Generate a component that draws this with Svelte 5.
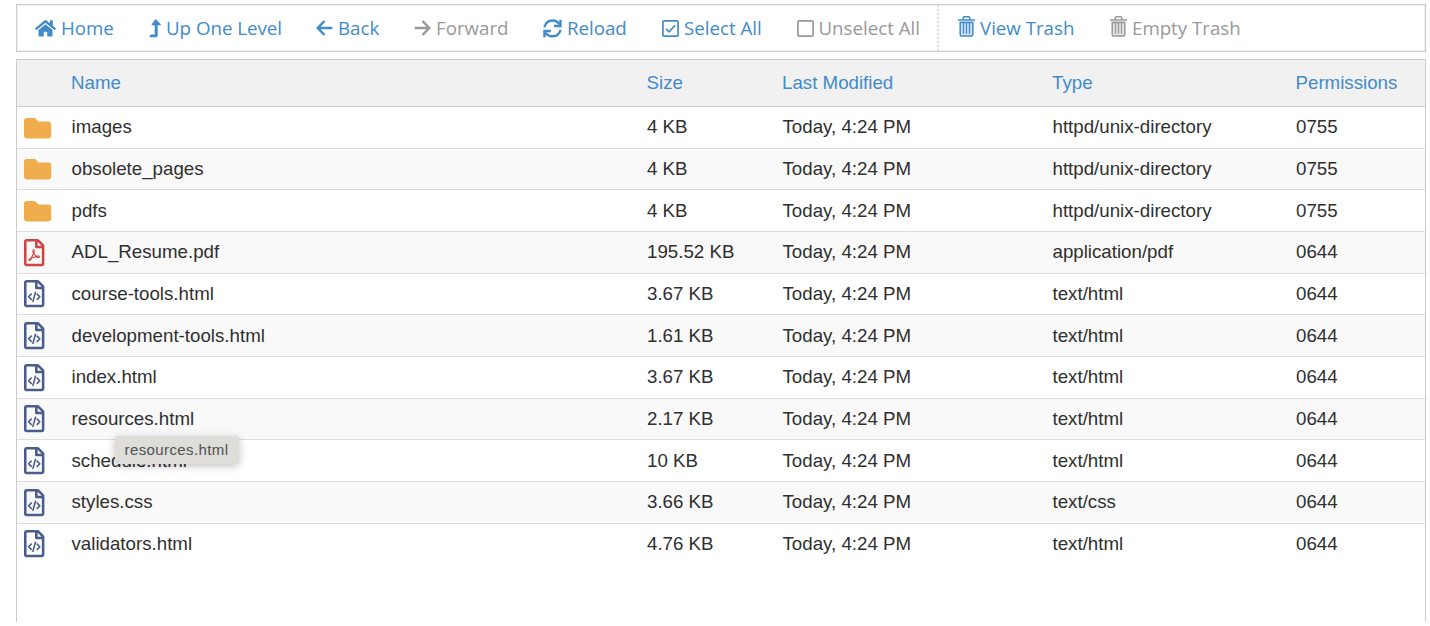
<script>
  const actions = [
    { icon: 'home', label: 'Home' },
    { icon: 'up', label: 'Up One Level' },
    { icon: 'back', label: 'Back' },
    { icon: 'forward', label: 'Forward', off: true },
    { icon: 'reload', label: 'Reload' },
    { icon: 'checked', label: 'Select All' },
    { icon: 'box', label: 'Unselect All', off: true },
    { icon: 'trash', label: 'View Trash' },
    { icon: 'trash', label: 'Empty Trash', off: true }
  ];

  const dir = 'httpd/unix-directory';
  const files = [
    { icon: 'folder', name: 'images', size: '4 KB', type: dir, perm: '0755' },
    { icon: 'folder', name: 'obsolete_pages', size: '4 KB', type: dir, perm: '0755' },
    { icon: 'folder', name: 'pdfs', size: '4 KB', type: dir, perm: '0755' },
    { icon: 'pdf', name: 'ADL_Resume.pdf', size: '195.52 KB', type: 'application/pdf', perm: '0644' },
    { icon: 'code', name: 'course-tools.html', size: '3.67 KB', type: 'text/html', perm: '0644' },
    { icon: 'code', name: 'development-tools.html', size: '1.61 KB', type: 'text/html', perm: '0644' },
    { icon: 'code', name: 'index.html', size: '3.67 KB', type: 'text/html', perm: '0644' },
    { icon: 'code', name: 'resources.html', size: '2.17 KB', type: 'text/html', perm: '0644', tip: true },
    { icon: 'code', name: 'schedule.html', size: '10 KB', type: 'text/html', perm: '0644' },
    { icon: 'code', name: 'styles.css', size: '3.66 KB', type: 'text/css', perm: '0644' },
    { icon: 'code', name: 'validators.html', size: '4.76 KB', type: 'text/html', perm: '0644' }
  ];
</script>

<main>
  <nav class="toolbar">
    {#each actions as a}
      <div class="action {a.icon}" class:off={a.off}>
        {#if a.icon === 'home'}
          <svg width="21" height="18.7" viewBox="0 0 576 512"><path d="M280.37 148.26L96 300.11V464a16 16 0 0 0 16 16l112.06-.29a16 16 0 0 0 15.92-16V368a16 16 0 0 1 16-16h64a16 16 0 0 1 16 16v95.64a16 16 0 0 0 16 16.05L464 480a16 16 0 0 0 16-16V300L295.67 148.26a12.19 12.19 0 0 0-15.3 0zM571.6 251.47L488 182.56V44.05a12 12 0 0 0-12-12h-56a12 12 0 0 0-12 12v72.61L318.47 43a48 48 0 0 0-61 0L4.34 251.47a12 12 0 0 0-1.6 16.9l25.5 31A12 12 0 0 0 45.15 301l235.22-193.74a12.19 12.19 0 0 1 15.3 0L530.9 301a12 12 0 0 0 16.9-1.6l25.5-31a12 12 0 0 0-1.7-16.93z" /></svg>
        {:else if a.icon === 'up'}
          <svg width="12" height="19" viewBox="0 0 12 19"><path d="M7.2 0.4 11.7 5.2Q12.2 6.2 11 6.2H8.7V16.6Q8.7 18.2 7.1 18.2H.9Q0 18 .5 17.2L2.1 15.5H5.7V6.2H3.4Q2.2 6.2 2.7 5.2L6.2.6Q6.7 0 7.2.4Z" /></svg>
        {:else if a.icon === 'back' || a.icon === 'forward'}
          <svg class="line" width="17" height="16" viewBox="0 0 17 16"><path class:flip={a.icon === 'forward'} d="M8.5 1 1.8 8l6.7 7M2.2 8H16.3" /></svg>
        {:else if a.icon === 'reload'}
          <svg class="line" width="19" height="19" viewBox="0 0 20 20"><path d="M1.5 8.6C2.6 4.3 6 1.6 10 1.6c3 0 5.5 1.5 7 3.8M18.4.8v6.6h-6.8M18.5 11.4C17.4 15.7 14 18.2 10 18.2c-3 0-5.5-1.3-7-3.6M1.5 19.2v-6.6h6.8" /></svg>
        {:else if a.icon === 'checked'}
          <svg class="box" width="17" height="17" viewBox="0 0 17 17"><rect x=".9" y=".9" width="15.2" height="15.2" rx="1.2" /><path d="m4 8.8 3 3 6-6.4" /></svg>
        {:else if a.icon === 'box'}
          <svg class="box" width="17" height="17" viewBox="0 0 17 17"><rect x=".9" y=".9" width="15.2" height="15.2" rx="1.2" /></svg>
        {:else}
          <svg class="bin" width="17" height="21" viewBox="0 0 17 21"><path class="tint" d="M2 5h13v15H2z" /><path d="M0 4h17M5.3 3.7V1.8q0-1 1-1h4.4q1 0 1 1v1.9M2.2 5.8v12.7q0 1.5 1.5 1.5h9.6q1.5 0 1.5-1.5V5.8M2.2 6.4h12.6" /><path class="ribs" d="M5.5 7v10.8M8.5 7v10.8M11.5 7v10.8" /></svg>
        {/if}
        <span>{a.label}</span>
      </div>
    {/each}
  </nav>

  <section class="list">
    <div class="row head">
      <span></span><span>Name</span><span>Size</span><span>Last Modified</span><span>Type</span><span>Permissions</span>
    </div>
    {#each files as f}
      <div class="row">
        <span class="kind">
          {#if f.icon === 'folder'}
            <svg class="folder" width="27.2" height="20.4" viewBox="0 64 512 384"><path d="M464 128H272l-64-64H48C21.49 64 0 85.49 0 112v288c0 26.51 21.49 48 48 48h416c26.51 0 48-21.49 48-48V176c0-26.51-21.49-48-48-48z" /></svg>
          {:else if f.icon === 'pdf'}
            <svg class="pdf" width="20.4" height="27.2" viewBox="0 0 384 512"><path d="M369.9 97.9L286 14C277 5 264.8-.1 252.1-.1H48C21.5 0 0 21.5 0 48v416c0 26.5 21.5 48 48 48h288c26.5 0 48-21.5 48-48V131.9c0-12.7-5.1-25-14.1-34zM332.1 128H256V51.9l76.1 76.1zM48 464V48h160v104c0 13.3 10.7 24 24 24h104v288H48zm250.2-143.7c-12.2-12-47-8.7-64.4-6.5-17.2-10.5-28.7-25-36.8-46.3 3.9-16.1 10.1-40.6 5.4-56-4.2-26.2-37.8-23.6-42.6-5.9-4.4 16.1-.4 38.5 7 67.1-10 23.9-24.9 56-35.4 74.4-20 10.3-47 26.2-51 46.2-3.3 15.8 26 55.2 76.1-31.2 22.4-7.4 46.8-16.5 68.4-20.1 18.9 10.2 41 17 55.8 17 25.5 0 28-28.2 17.5-38.7zm-198.1 77.8c5.1-13.7 24.5-29.5 30.4-35-19 30.3-30.4 35.7-30.4 35zm81.6-190.6c7.4 0 6.7 32.1 1.8 40.8-4.4-13.9-4.3-40.8-1.8-40.8zm-24.4 136.6c9.7-16.9 18-37 24.7-54.7 8.3 15.1 18.9 27.2 30.1 35.5-20.8 4.3-38.9 13.1-54.8 19.2zm131.6-5s-5 6-37.3-7.8c35.1-2.6 40.9 5.4 37.3 7.8z" /></svg>
          {:else}
            <svg class="code" width="20.4" height="27.2" viewBox="0 0 384 512"><path d="M369.9 97.9L286 14C277 5 264.8-.1 252.1-.1H48C21.5 0 0 21.5 0 48v416c0 26.5 21.5 48 48 48h288c26.5 0 48-21.5 48-48V131.9c0-12.7-5.1-25-14.1-34zM256 51.9l76.1 76.1H256zM336 464H48V48h160v104c0 13.3 10.7 24 24 24h104z" /><path class="glyph" d="M136 266 86 316l50 50M248 266l50 50-50 50M216 230l-48 172" /></svg>
          {/if}
        </span>
        <span class="name">{f.name}{#if f.tip}<span class="tip">{f.name}</span>{/if}</span>
        <span>{f.size}</span>
        <span>Today, 4:24 PM</span>
        <span>{f.type}</span>
        <span>{f.perm}</span>
      </div>
    {/each}
  </section>
</main>

<style>
  :global(body) { margin: 0; background: #fff; }
  main {
    box-sizing: border-box;
    height: 622px;
    padding: 4px 4px 0 16px;
    display: flex;
    flex-direction: column;
    gap: 7px;
    overflow: hidden;
    font-family: "Liberation Sans", Arial, sans-serif;
  }
  .toolbar {
    box-sizing: border-box;
    height: 48px;
    flex: none;
    border: 1px solid #ccc;
    box-shadow: inset 0 0 0 1px #f0f0f0;
    padding-left: 18px;
    display: grid;
    grid-template-columns: 114px 167px 98px 129px 119px 134.5px 161.5px 152px 160px;
    font: 18.7px "Open Sans", sans-serif;
    color: #428bca;
  }
  .action { display: flex; align-items: center; gap: 5px; white-space: nowrap; }
  .action.off { color: #999; }
  .action span { line-height: 24px; }
  .action.box { border-right: 2px dotted #ddd; margin-right: 19px; }
  svg { fill: currentColor; flex: none; overflow: visible; }
  .line { fill: none; stroke: currentColor; stroke-width: 2.5; }
  .flip { transform: translateX(17px) scaleX(-1); }
  svg.box { fill: none; stroke: currentColor; stroke-width: 1.7; }
  .bin { fill: none; stroke: currentColor; stroke-width: 1.5; margin-top: -4px; }
  .bin .tint { fill: currentColor; opacity: .25; stroke: none; }
  .bin .ribs { stroke-width: 1.3; }
  .list {
    flex: 1;
    border: 1px solid #ccc;
    border-bottom: 0;
  }
  .row {
    box-sizing: border-box;
    height: 41.66px;
    padding-left: 7px;
    display: grid;
    grid-template-columns: 47.5px 575.5px 135.5px 270px 243.5px 1fr;
    align-items: center;
    border-bottom: 1px solid #ddd;
    color: #2f2f2f;
    font-size: 18.72px;
    white-space: nowrap;
  }
  .row:nth-child(odd) { background: #f9f9f9; }
  .row:last-child { border-bottom-color: transparent; background: #fff; }
  .row.head { height: 47px; background: #f1f1f1; color: #428bca; border-bottom-color: #ccc; }
  .row.head span { position: relative; left: -.5px; }
  .kind { display: flex; }
  .folder { color: #f0ad4e; position: relative; top: .5px; }
  .pdf { color: #d04443; }
  .code { color: #4a5c8c; }
  .glyph { fill: none; stroke: currentColor; stroke-width: 30; stroke-linecap: round; stroke-linejoin: round; }
  .name { position: relative; }
  .tip {
    position: absolute;
    left: 43px;
    top: 28px;
    z-index: 1;
    box-sizing: border-box;
    width: 124px;
    height: 28px;
    text-align: center;
    line-height: 27px;
    font-size: 15px;
    letter-spacing: .4px;
    color: #505050;
    background: #deddda;
    border-radius: 3px;
    box-shadow: 0 2px 8px rgba(0, 0, 0, .25);
  }
</style>
